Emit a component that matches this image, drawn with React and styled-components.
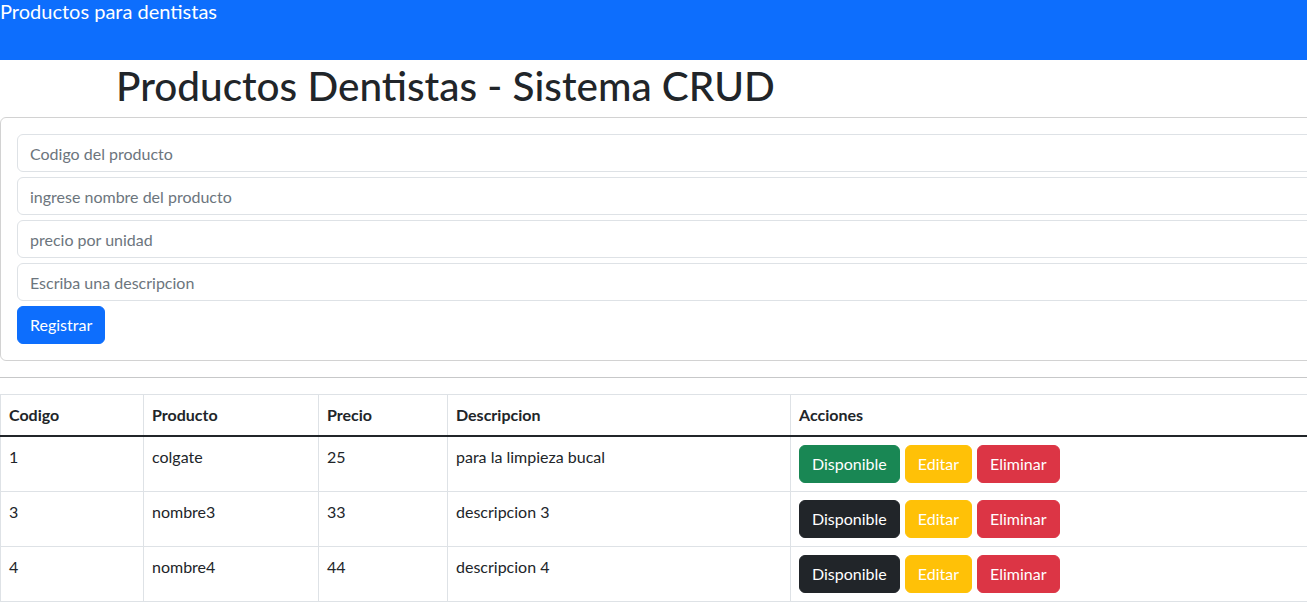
import React from 'react';
import styled, { createGlobalStyle } from 'styled-components';

const GlobalStyle = createGlobalStyle`
	html, body {
		margin: 0;
		padding: 0;
		overflow-x: hidden;
		background: #fff;
	}
	body {
		font-family: Lato, "Noto Sans", sans-serif;
		font-size: 16px;
		line-height: 1.5;
		color: #212529;
	}
	* {
		box-sizing: border-box;
	}
`;

const Page = styled.div`
	width: 1340px;
`;

const Navbar = styled.nav`
	height: 60px;
	background: #0d6efd;
`;

const Brand = styled.span`
	display: block;
	color: #fff;
	font-size: 20px;
	line-height: 22px;
`;

const Title = styled.h1`
	margin: 1px 0 8px;
	padding: 1px 0 0 116px;
	height: 48px;
	font-size: 40.5px;
	font-weight: 500;
	line-height: 48px;
`;

const Card = styled.div`
	border: 1px solid rgba(0, 0, 0, 0.175);
	border-radius: 6px;
	padding: 16px;
`;

const Form = styled.form`
	display: flex;
	flex-direction: column;
	align-items: flex-start;
	gap: 5px;
`;

const Input = styled.input`
	display: block;
	width: 100%;
	height: 38px;
	padding: 6px 12px;
	font: inherit;
	color: #212529;
	border: 1px solid #dee2e6;
	border-radius: 6px;
	outline: none;

	&::placeholder {
		color: #6c757d;
	}
`;

const variants = {
	primary: '#0d6efd',
	success: '#198754',
	dark: '#212529',
	warning: '#ffc107',
	danger: '#dc3545',
};

const Button = styled.button`
	display: inline-block;
	height: 38px;
	padding: 6px 12px;
	font: inherit;
	line-height: 24px;
	color: #fff;
	background: ${(p) => variants[p.$variant]};
	border: 1px solid ${(p) => variants[p.$variant]};
	border-radius: 6px;
	cursor: pointer;
`;

const Divider = styled.hr`
	margin: 16px 0;
	border: 0;
	border-top: 1px solid #212529;
	opacity: 0.25;
`;

const Table = styled.table`
	width: 100%;
	border-collapse: collapse;
	table-layout: fixed;

	th, td {
		border: 1px solid #dee2e6;
		padding: 8px;
		text-align: left;
		vertical-align: top;
	}

	th {
		font-weight: 700;
	}

	tbody {
		border-top: 2px solid #212529;
	}
`;

const Actions = styled.div`
	display: flex;
	gap: 5px;
`;

const productos = [
	{ codigo: 1, nombre: 'colgate', precio: 25, descripcion: 'para la limpieza bucal', disponible: true },
	{ codigo: 3, nombre: 'nombre3', precio: 33, descripcion: 'descripcion 3', disponible: false },
	{ codigo: 4, nombre: 'nombre4', precio: 44, descripcion: 'descripcion 4', disponible: false },
];

export default function App() {
	return (
		<Page>
			<GlobalStyle />
			<Navbar>
				<Brand>Productos para dentistas</Brand>
			</Navbar>

			<Title>Productos Dentistas - Sistema CRUD</Title>

			<Card>
				<Form onSubmit={(e) => e.preventDefault()}>
					<Input placeholder="Codigo del producto" />
					<Input placeholder="ingrese nombre del producto" />
					<Input placeholder="precio por unidad" />
					<Input placeholder="Escriba una descripcion" />
					<Button $variant="primary">Registrar</Button>
				</Form>
			</Card>

			<Divider />

			<Table>
				<colgroup>
					<col style={{ width: 143 }} />
					<col style={{ width: 175 }} />
					<col style={{ width: 129 }} />
					<col style={{ width: 343 }} />
					<col />
				</colgroup>
				<thead>
					<tr>
						<th>Codigo</th>
						<th>Producto</th>
						<th>Precio</th>
						<th>Descripcion</th>
						<th>Acciones</th>
					</tr>
				</thead>
				<tbody>
					{productos.map((p) => (
						<tr key={p.codigo}>
							<td>{p.codigo}</td>
							<td>{p.nombre}</td>
							<td>{p.precio}</td>
							<td>{p.descripcion}</td>
							<td>
								<Actions>
									<Button $variant={p.disponible ? 'success' : 'dark'}>Disponible</Button>
									<Button $variant="warning">Editar</Button>
									<Button $variant="danger">Eliminar</Button>
								</Actions>
							</td>
						</tr>
					))}
				</tbody>
			</Table>
		</Page>
	);
}
